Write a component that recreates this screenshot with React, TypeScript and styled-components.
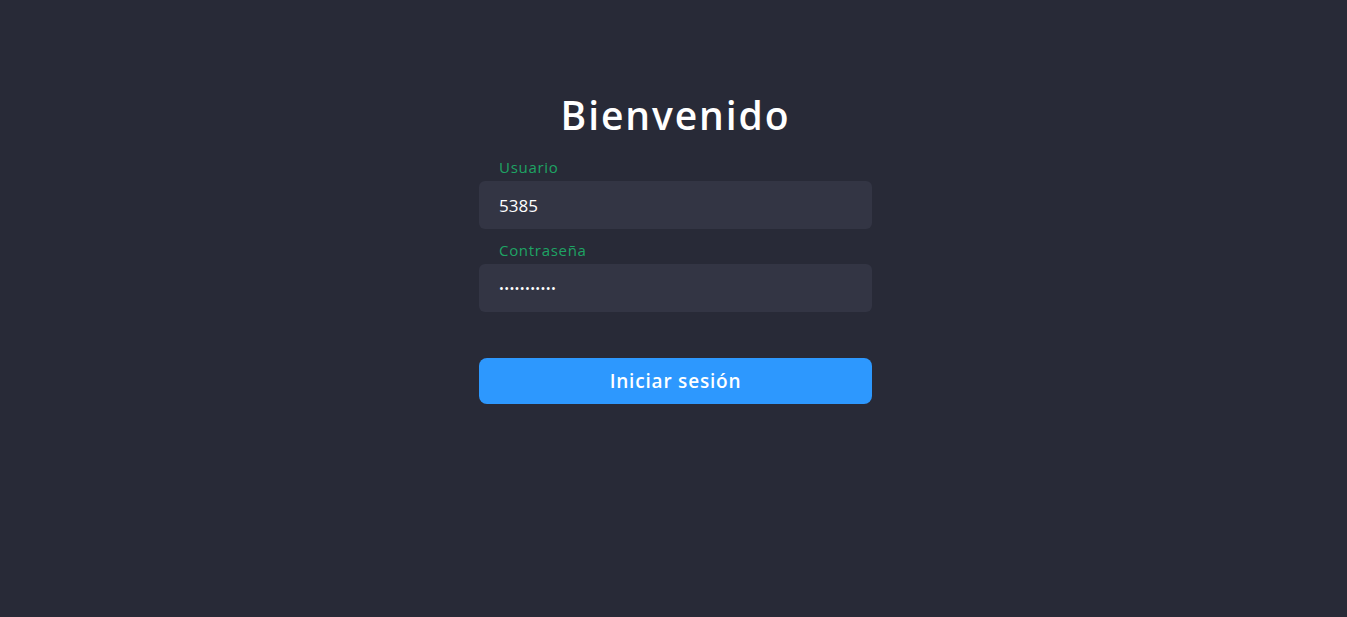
import React from "react";
import styled, { createGlobalStyle } from "styled-components";

const Global = createGlobalStyle`
  html, body { margin: 0; padding: 0; background: #282a37; }
  body { font-family: "Open Sans", "Noto Sans", sans-serif; }
`;

const Page = styled.div`
  min-height: 617px;
  display: flex;
  justify-content: center;
  padding-left: 4px;
  box-sizing: border-box;
`;

const Form = styled.form`
  width: 393px;
  margin-top: 88px;
  display: flex;
  flex-direction: column;
`;

const Title = styled.h1`
  margin: 0 0 15px;
  text-align: center;
  color: #ffffff;
  font-size: 39px;
  font-weight: 600;
  line-height: 54px;
  letter-spacing: 1.9px;
`;

const Field = styled.div`
  display: flex;
  flex-direction: column;
  margin-bottom: 11px;
`;

const Label = styled.label`
  color: #1ea464;
  font-size: 15px;
  line-height: 20px;
  padding-left: 20px;
  margin-bottom: 4px;
  letter-spacing: 0.7px;
`;

const Input = styled.input<{ $secret?: boolean }>`
  height: 48px;
  box-sizing: border-box;
  border: none;
  outline: none;
  border-radius: 6px;
  background: #333544;
  color: #ffffff;
  font-family: "Open Sans", "Noto Sans", sans-serif;
  font-size: ${(p) => (p.$secret ? "13px" : "17px")};
  letter-spacing: ${(p) => (p.$secret ? "0.3px" : "0")};
  padding: 0 20px;
`;

const Button = styled.button`
  margin-top: 35px;
  height: 46px;
  border: none;
  border-radius: 8px;
  background: #2d98fe;
  color: #ffffff;
  font-family: "Open Sans", "Noto Sans", sans-serif;
  font-size: 19px;
  font-weight: 600;
  letter-spacing: 0.8px;
  cursor: pointer;
`;

export default function App() {
  return (
    <>
      <Global />
      <Page>
        <Form onSubmit={(e) => e.preventDefault()}>
          <Title>Bienvenido</Title>
          <Field>
            <Label>Usuario</Label>
            <Input defaultValue="5385" />
          </Field>
          <Field>
            <Label>Contraseña</Label>
            <Input $secret type="password" defaultValue="12345678901" />
          </Field>
          <Button type="submit">Iniciar sesión</Button>
        </Form>
      </Page>
    </>
  );
}
